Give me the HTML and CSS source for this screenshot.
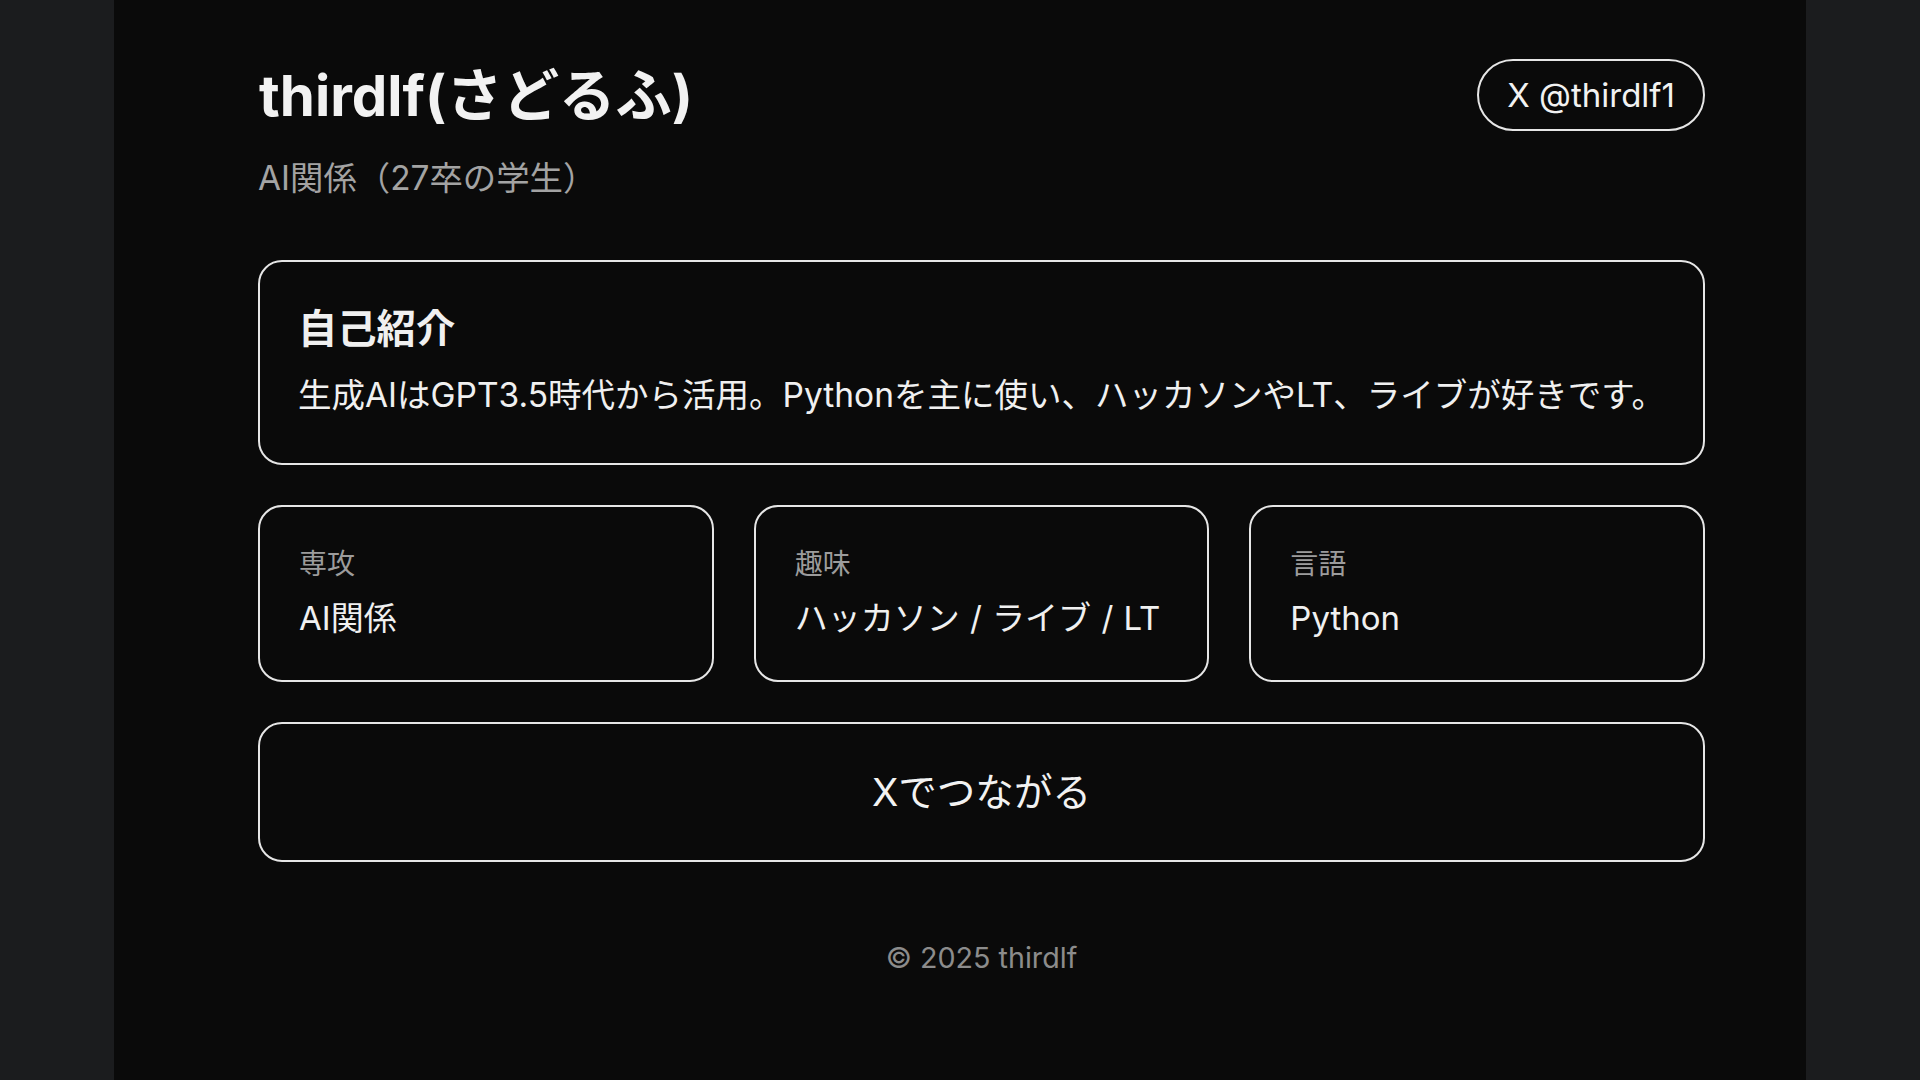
FILE: index.html
```html
<!DOCTYPE html>
<html lang="ja">
<head>
<meta charset="utf-8">
<title>thirdlf(さどるふ)</title>
<link rel="stylesheet" href="styles.css">
</head>
<body>
<div class="page">
  <header class="header">
    <div class="identity">
      <h1 class="name">thirdlf(さどるふ)</h1>
      <p class="tagline">AI関係（27卒の学生）</p>
    </div>
    <a class="pill" href="#">X @thirdlf1</a>
  </header>
  <main class="main">
    <section class="card intro">
      <h2 class="intro-title">自己紹介</h2>
      <p class="intro-text">生成AIはGPT3.5時代から活用。Pythonを主に使い、ハッカソンやLT、ライブが好きです。</p>
    </section>
    <section class="facts">
      <div class="card fact">
        <div class="fact-label">専攻</div>
        <div class="fact-value">AI関係</div>
      </div>
      <div class="card fact">
        <div class="fact-label">趣味</div>
        <div class="fact-value">ハッカソン / ライブ / LT</div>
      </div>
      <div class="card fact">
        <div class="fact-label">言語</div>
        <div class="fact-value">Python</div>
      </div>
    </section>
    <a class="card cta" href="#">Xでつながる</a>
  </main>
  <footer class="footer">© 2025 thirdlf</footer>
</div>
</body>
</html>
```
FILE: styles.css
```css
html, body {
  margin: 0;
  padding: 0;
}
body {
  background: #1b1c1e;
  font-family: Inter, "Noto Sans CJK JP", sans-serif;
  color: #f0f0f0;
}
.page {
  box-sizing: border-box;
  width: 1692px;
  min-height: 1080px;
  margin: 0 auto;
  background: #0a0a0a;
  padding: 59px 101px 40px 144px;
}
.header {
  display: flex;
  justify-content: space-between;
  align-items: flex-start;
}
.name {
  margin: 0 0 0 1px;
  font-size: 56.4px;
  font-weight: 700;
  line-height: 74px;
  letter-spacing: 0;
  color: #f2f2f2;
}
.tagline {
  margin: 21px 0 0;
  font-size: 33.4px;
  line-height: 48px;
  color: #a3a3a3;
}
.pill {
  box-sizing: border-box;
  height: 72px;
  padding: 0 28px;
  display: flex;
  align-items: center;
  border: 2px solid #e6e6e6;
  border-radius: 36px;
  font-size: 33px;
  color: #f2f2f2;
  text-decoration: none;
}
.main {
  margin-top: 58px;
  display: flex;
  flex-direction: column;
  gap: 40px;
}
.card {
  border: 2px solid #e6e6e6;
  border-radius: 24px;
}
.intro {
  padding: 40px 38px 42px;
}
.intro-title {
  margin: 0;
  font-size: 39.3px;
  font-weight: 700;
  line-height: 53px;
}
.intro-text {
  margin: 15px 0 0;
  font-size: 33.5px;
  line-height: 51px;
}
.facts {
  display: grid;
  grid-template-columns: repeat(3, 1fr);
  gap: 40px;
}
.fact {
  padding: 38px 39px 39px;
}
.fact-label {
  font-size: 28px;
  line-height: 39px;
  color: #9c9c9c;
}
.fact-value {
  margin-top: 12px;
  font-size: 33px;
  line-height: 45px;
  word-spacing: 1px;
  color: #f0f0f0;
}
.cta {
  display: block;
  padding: 41px 40px;
  text-align: center;
  font-size: 38.6px;
  line-height: 54px;
  color: #f2f2f2;
  text-decoration: none;
}
.footer {
  margin-top: 75px;
  text-align: center;
  font-size: 28.7px;
  line-height: 42px;
  color: #8c8c8c;
}
```
